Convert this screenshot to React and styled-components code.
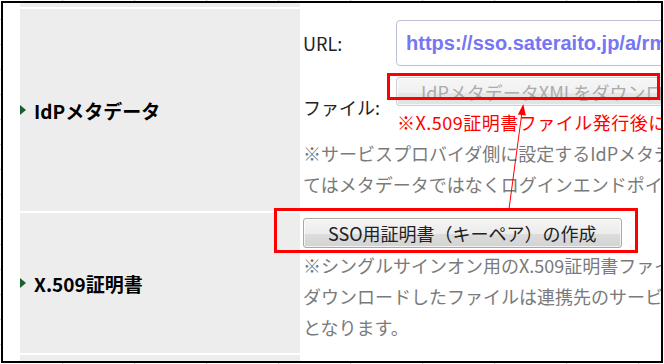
import React from 'react';
import styled, { createGlobalStyle } from 'styled-components';

const GlobalStyle = createGlobalStyle`
  html, body {
    margin: 0;
    padding: 0;
    background: #fff;
  }
  body {
    font-family: "Noto Sans CJK JP", "Noto Sans", sans-serif;
  }
`;

const Stage = styled.div`
  position: relative;
  width: 664px;
  height: 364px;
  box-sizing: border-box;
  padding: 1px;
  background-image:
    linear-gradient(to right, #c8c8c8 1px, transparent 1px),
    linear-gradient(to right, #c8c8c8 1px, transparent 1px),
    linear-gradient(#c8c8c8 1px, transparent 1px);
  background-size: 72px 1px, 72px 1px, 1px 25px;
  background-position: 62px 0, 62px 363px, 0 19px;
  background-repeat: repeat-x, repeat-x, repeat-y;
`;

const Frame = styled.div`
  width: 100%;
  height: 100%;
  box-sizing: border-box;
  border: 2px solid #000;
  background: #fff;
  overflow: hidden;
  padding-left: 17px;
`;

const Table = styled.div`
  display: flex;
  flex-direction: column;
  gap: 2px;
`;

const Row = styled.div`
  display: grid;
  grid-template-columns: 280px 1fr;
  height: ${({ $height }) => $height}px;
  flex: none;
`;

const Head = styled.div`
  display: flex;
  align-items: center;
  gap: 8px;
  background: #ededed;
  font-size: 19px;
  font-weight: 700;
  color: #000;
  white-space: nowrap;
`;

const Bullet = styled.span`
  width: 0;
  height: 0;
  border-top: 5px solid transparent;
  border-bottom: 5px solid transparent;
  border-left: 6px solid #1b5e2c;
`;

const Cell = styled.div`
  background: #fff;
  padding: ${({ $top }) => $top}px 0 0 3px;
  white-space: nowrap;
  min-width: 0;
`;

const Form = styled.div`
  display: grid;
  grid-template-columns: 93px auto;
  row-gap: 11px;
`;

const FieldLabel = styled.div`
  align-self: center;
  font-size: 18px;
  color: #222;
`;

const UrlBox = styled.div`
  width: 420px;
  height: 46px;
  box-sizing: border-box;
  display: flex;
  align-items: center;
  padding-left: 9px;
  border: 1px solid #bcc0d8;
  border-radius: 4px;
  font-family: "Liberation Sans", Arial, sans-serif;
  font-size: 20px;
  font-weight: 700;
  color: #7676f4;
`;

const Button = styled.button`
  display: flex;
  align-items: center;
  box-sizing: border-box;
  height: ${({ $height }) => $height}px;
  padding: 0 24px;
  border: 1px solid ${({ disabled }) => (disabled ? '#cfcfcf' : '#a9a9a9')};
  border-radius: 3px;
  background: ${({ disabled }) =>
    disabled
      ? 'linear-gradient(#f6f6f6 0%, #f1f1f1 55%, #e6e6e6 55%, #e2e2e2 100%)'
      : 'linear-gradient(#f4f4f4 0%, #ececec 55%, #dcdcdc 55%, #d3d3d3 100%)'};
  box-shadow: inset 0 0 0 1px rgba(255, 255, 255, 0.7);
  font-family: "Noto Sans CJK JP", "Noto Sans", sans-serif;
  font-size: ${({ $size }) => $size}px;
  color: ${({ disabled }) => (disabled ? '#ababab' : '#222')};
  white-space: nowrap;
`;

const Alert = styled.div`
  margin-top: 1px;
  padding-left: 1px;
  font-size: 18px;
  line-height: 30px;
  letter-spacing: 0.5px;
  color: #ff0000;
`;

const Note = styled.div`
  margin-top: ${({ $gap }) => $gap}px;
  font-size: 18px;
  line-height: 31px;
  color: #7a7a7a;
`;

const Highlight = styled.div`
  position: absolute;
  box-sizing: border-box;
  border: 3px solid #ff0000;
  pointer-events: none;
`;

const DownloadHighlight = styled(Highlight)`
  left: 387px;
  top: 73px;
  width: 273px;
  height: 27px;
`;

const KeypairHighlight = styled(Highlight)`
  left: 274px;
  top: 208px;
  width: 364px;
  height: 45px;
`;

const Overlay = styled.svg`
  position: absolute;
  left: 0;
  top: 0;
  pointer-events: none;
`;

export default function App() {
  return (
    <>
      <GlobalStyle />
      <Stage>
        <Frame>
          <Table>
            <Row $height={4}>
              <Head />
              <Cell $top={0} />
            </Row>
            <Row $height={202}>
              <Head>
                <Bullet />
                IdPメタデータ
              </Head>
              <Cell $top={11}>
                <Form>
                  <FieldLabel>URL:</FieldLabel>
                  <UrlBox>https://sso.sateraito.jp/a/rmember.jp/saml2/metadata</UrlBox>
                  <FieldLabel>ファイル:</FieldLabel>
                  <div>
                    <Button type="button" disabled $height={29} $size={18}>
                      IdPメタデータXMLをダウンロード
                    </Button>
                    <Alert>※X.509証明書ファイル発行後にダウンロード可能になります。</Alert>
                  </div>
                </Form>
                <Note $gap={1}>
                  ※サービスプロバイダ側に設定するIdPメタデータです。サービスによっ
                  <br />
                  てはメタデータではなくログインエンドポイントURLと証明書を設定します。
                </Note>
              </Cell>
            </Row>
            <Row $height={140}>
              <Head>
                <Bullet />
                X.509証明書
              </Head>
              <Cell $top={5}>
                <Button type="button" $height={30} $size={18}>
                  SSO用証明書（キーペア）の作成
                </Button>
                <Note $gap={2}>
                  ※シングルサインオン用のX.509証明書ファイルを作成します。作成後に
                  <br />
                  ダウンロードしたファイルは連携先のサービスに登録する必要があり、必須
                  <br />
                  となります。
                </Note>
              </Cell>
            </Row>
            <Row $height={20}>
              <Head />
              <Cell $top={0} />
            </Row>
          </Table>
        </Frame>
        <DownloadHighlight />
        <KeypairHighlight />
        <Overlay width="664" height="364" viewBox="0 0 664 364">
          <line x1="509" y1="209" x2="522" y2="112" stroke="#ff0000" strokeWidth="1" />
          <polygon points="523.3,104 525.8,115.4 517.9,114.4" fill="#ff0000" />
        </Overlay>
      </Stage>
    </>
  );
}
